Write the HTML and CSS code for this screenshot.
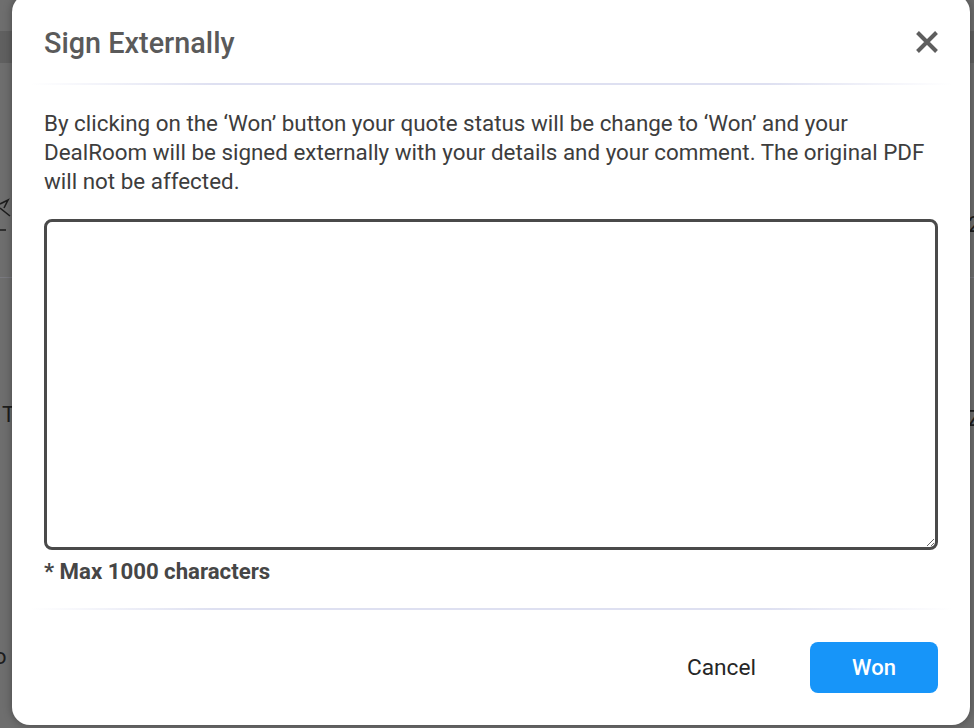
FILE: index.html
```html
<!DOCTYPE html>
<html>
<head>
<meta charset="utf-8">
<link rel="stylesheet" href="styles.css">
</head>
<body>
<div class="page">
  <div class="bg-band"></div>
  <div class="bg-line"></div>
  <svg class="bg-icon" width="14" height="40" viewBox="0 0 14 40"><path d="M0 8 L8 4 L4 12 M0 12 L10 20 M0 34 L6 34" stroke="#1d1d1d" stroke-width="1.6" fill="none"/></svg>
  <span class="bg-glyph g2">T</span>
  <span class="bg-glyph g3">o</span>
  <span class="bg-glyph g4">2</span>
  <span class="bg-glyph g5">Z</span>
  <div class="modal">
    <div class="modal-header">
      <h2 class="modal-title">Sign Externally</h2>
      <button class="close-btn" aria-label="Close">
        <svg width="24" height="24" viewBox="0 0 24 24"><path d="M2.5 2.5 L21.5 21.5 M21.5 2.5 L2.5 21.5" stroke="#5e5e5e" stroke-width="4" stroke-linecap="butt" fill="none"/></svg>
      </button>
    </div>
    <div class="divider"></div>
    <div class="modal-body">
      <p class="desc">By clicking on the ‘Won’ button your quote status will be change to ‘Won’ and your DealRoom will be signed externally with your details and your comment. The original PDF will not be affected.</p>
      <textarea class="comment"></textarea>
      <div class="hint">* Max 1000 characters</div>
    </div>
    <div class="divider"></div>
    <div class="modal-footer">
      <button class="btn-cancel">Cancel</button>
      <button class="btn-won">Won</button>
    </div>
  </div>
</div>
</body>
</html>
```

FILE: styles.css
```css
html, body {
  margin: 0;
  padding: 0;
  width: 974px;
  height: 728px;
  overflow: hidden;
  font-family: Roboto, "Liberation Sans", Arial, sans-serif;
}

.page {
  position: relative;
  width: 974px;
  height: 728px;
  background: #6e6e6e;
  display: flex;
  align-items: flex-start;
  padding-left: 12px;
  box-sizing: border-box;
  overflow: hidden;
}

.bg-band {
  position: absolute;
  left: 0;
  top: 31px;
  width: 974px;
  height: 32px;
  background: #606060;
}

.bg-line {
  position: absolute;
  left: 0;
  top: 277px;
  width: 974px;
  height: 1px;
  background: #7a7a80;
}

.bg-icon {
  position: absolute;
  left: 0;
  top: 196px;
}

.bg-glyph {
  position: absolute;
  font-size: 22px;
  line-height: 26px;
  color: #1d1d1d;
}
.g2 { left: 2px; top: 402px; }
.g3 { left: -6px; top: 644px; }
.g4 { left: 968px; top: 212px; }
.g5 { left: 968px; top: 406px; }

.modal {
  position: relative;
  margin-top: -6px;
  width: 958px;
  height: 731px;
  flex: none;
  background: #ffffff;
  border-radius: 18px;
  box-shadow: 0 0 8px rgba(0, 0, 0, 0.35);
  display: flex;
  flex-direction: column;
  box-sizing: border-box;
}

.modal-header {
  display: flex;
  align-items: flex-start;
  justify-content: space-between;
  padding: 32px 31px 0 32px;
  height: 57px;
}

.modal-title {
  margin: 0;
  font-size: 28.8px;
  line-height: 34px;
  font-weight: 500;
  color: #5a5a5a;
}

.close-btn {
  border: 0;
  background: none;
  padding: 0;
  width: 24px;
  height: 24px;
  margin-top: 4px;
  cursor: pointer;
}

.close-btn svg {
  display: block;
}

.divider {
  height: 2px;
  flex: none;
  margin: 0 18px;
  background: linear-gradient(90deg, rgba(222, 224, 242, 0) 0%, #dee0f1 20%, #dee0f1 80%, rgba(222, 224, 242, 0) 100%);
}

.modal-body {
  padding: 0 32px;
  display: flex;
  flex-direction: column;
}

.desc {
  margin: 24px 0 0 0;
  font-size: 22.4px;
  line-height: 29px;
  color: #3d3d3d;
}

.comment {
  display: block;
  margin: 23px 0 0 0;
  width: 894px;
  height: 331px;
  box-sizing: border-box;
  border: 3px solid #4a4a4a;
  border-radius: 8px;
  resize: vertical;
  font-family: inherit;
  font-size: 18px;
  padding: 8px;
  outline: none;
}

.hint {
  margin-top: 7px;
  font-size: 22.2px;
  font-weight: 700;
  color: #464646;
  line-height: 28px;
  margin-bottom: 23px;
}

.modal-footer {
  display: flex;
  justify-content: flex-end;
  align-items: center;
  gap: 54px;
  padding: 32px 32px 0 32px;
}

.btn-cancel {
  border: 0;
  background: none;
  font-family: inherit;
  font-size: 22.7px;
  color: #262626;
  padding: 0;
  height: 51px;
  cursor: pointer;
}

.btn-won {
  border: 0;
  width: 128px;
  height: 51px;
  border-radius: 8px;
  background: #1795f9;
  color: #ffffff;
  font-family: inherit;
  font-size: 22px;
  font-weight: 500;
  cursor: pointer;
}
```
